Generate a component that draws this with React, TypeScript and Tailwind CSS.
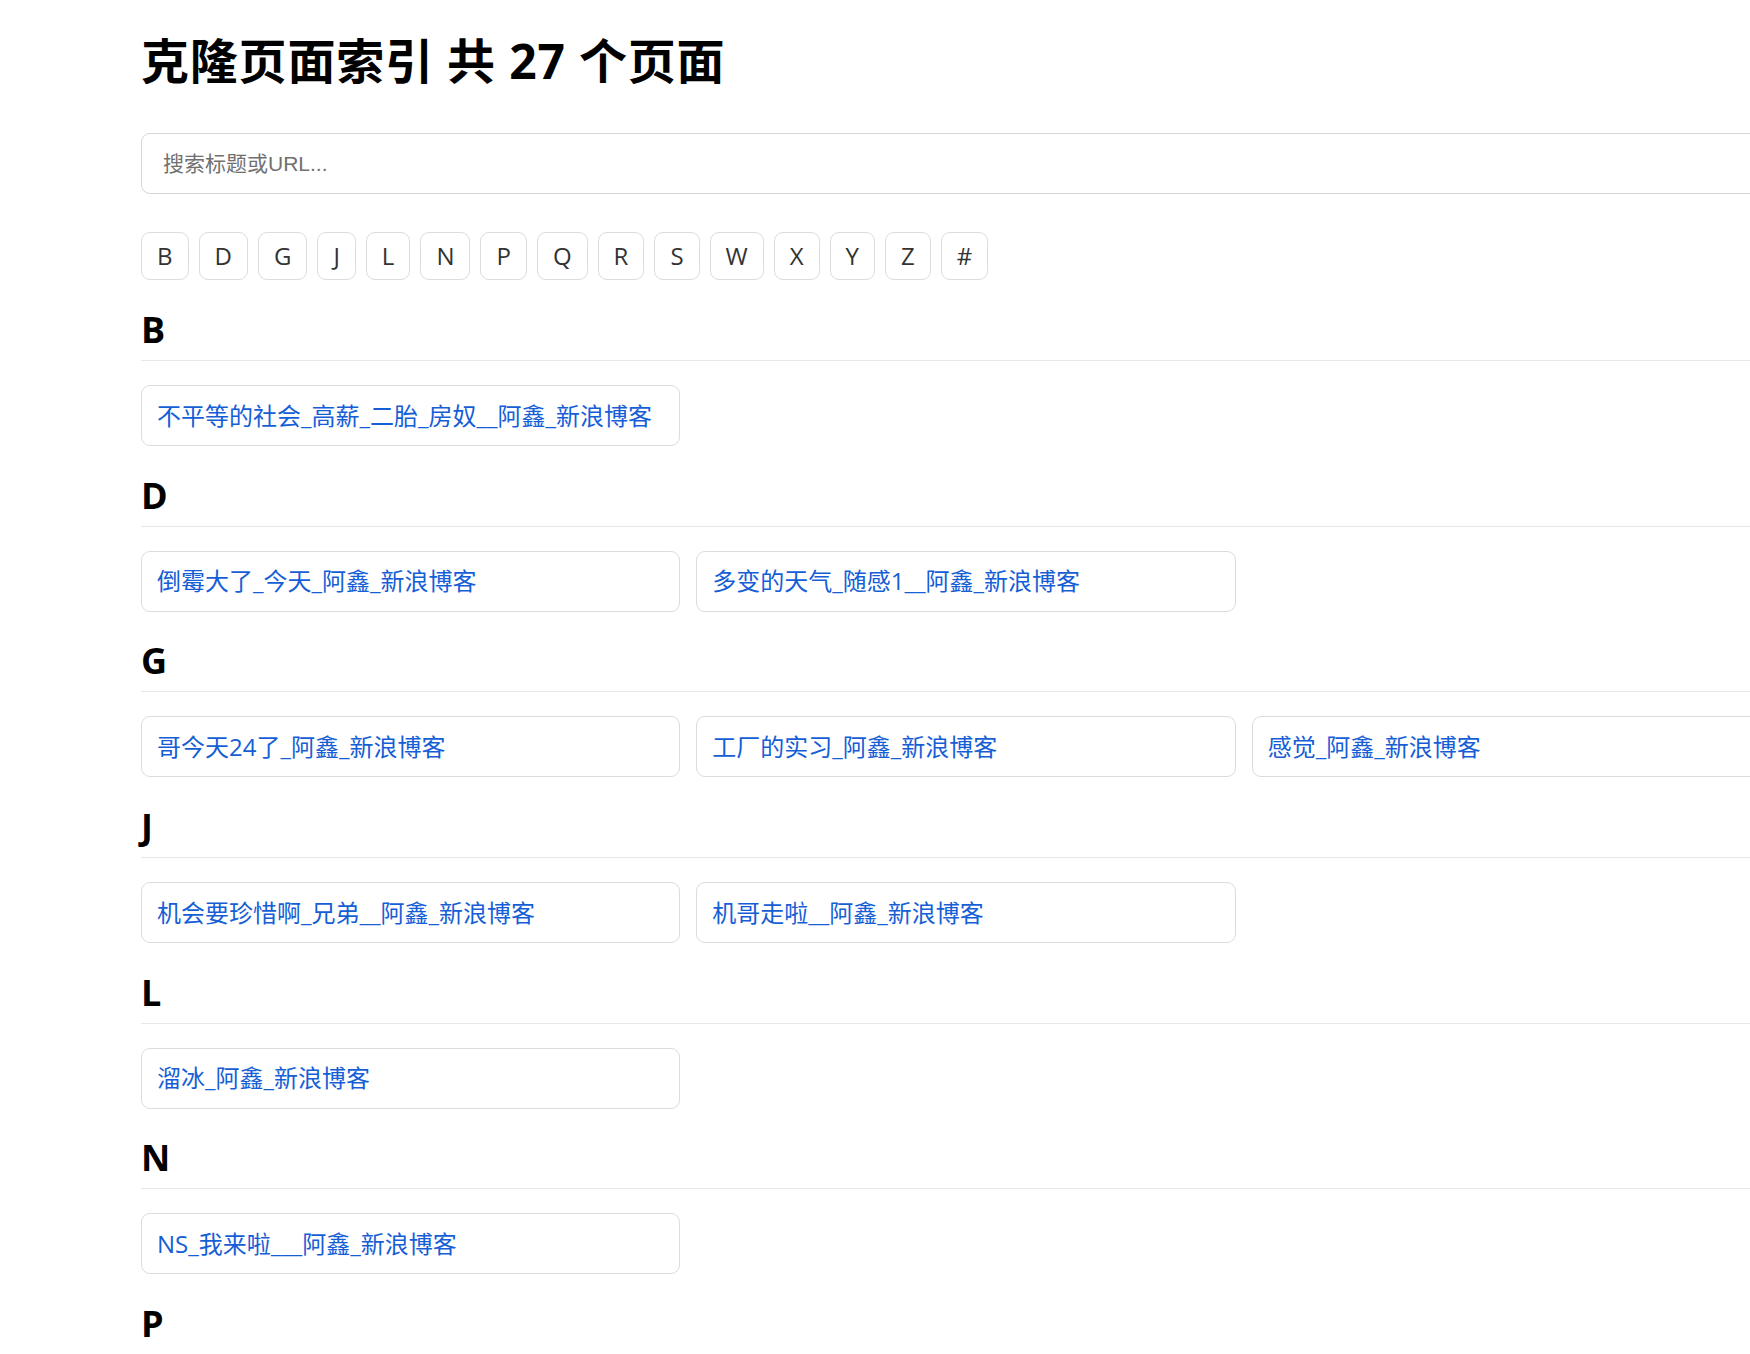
import React from "react";

const sections: { letter: string; items: string[] }[] = [
  { letter: "B", items: ["不平等的社会_高薪_二胎_房奴__阿鑫_新浪博客"] },
  { letter: "D", items: ["倒霉大了_今天_阿鑫_新浪博客", "多变的天气_随感1__阿鑫_新浪博客"] },
  { letter: "G", items: ["哥今天24了_阿鑫_新浪博客", "工厂的实习_阿鑫_新浪博客", "感觉_阿鑫_新浪博客"] },
  { letter: "J", items: ["机会要珍惜啊_兄弟__阿鑫_新浪博客", "机哥走啦__阿鑫_新浪博客"] },
  { letter: "L", items: ["溜冰_阿鑫_新浪博客"] },
  { letter: "N", items: ["NS_我来啦___阿鑫_新浪博客"] },
  { letter: "P", items: ["朋友_阿鑫_新浪博客", "跑步_阿鑫_新浪博客"] },
  { letter: "Q", items: ["青春_阿鑫_新浪博客", "秋天来了_阿鑫_新浪博客"] },
  { letter: "R", items: ["人生_阿鑫_新浪博客", "热_阿鑫_新浪博客"] },
  { letter: "S", items: ["生活_阿鑫_新浪博客", "睡不着__阿鑫_新浪博客"] },
  { letter: "W", items: ["无聊_阿鑫_新浪博客", "晚安_阿鑫_新浪博客"] },
  { letter: "X", items: ["新年快乐_阿鑫_新浪博客", "想家了_阿鑫_新浪博客"] },
  { letter: "Y", items: ["雨天_阿鑫_新浪博客", "一年了_阿鑫_新浪博客"] },
  { letter: "Z", items: ["周末_阿鑫_新浪博客", "再见_阿鑫_新浪博客"] },
  { letter: "#", items: ["2011_阿鑫_新浪博客"] },
];

export default function App() {
  return (
    <div className="w-full min-h-screen overflow-hidden bg-white font-['Open_Sans','Noto_Sans_CJK_SC',sans-serif] text-black">
      <div className="w-[1650px] ml-[141px] pt-[33px] pb-[40px]">
        <h1 className="text-[48px] leading-[56px] font-bold m-0 tracking-[0.8px]">
          克隆页面索引 共 27 个页面
        </h1>

        <input
          type="text"
          placeholder="搜索标题或URL..."
          className="mt-[44px] block w-full h-[61px] border border-[#d6d6d6] rounded-[9px] px-[21px] text-[21px] font-['Liberation_Sans','Noto_Sans_CJK_SC',sans-serif] placeholder:text-[#707070] outline-none"
        />

        <div className="mt-[38px] flex flex-wrap gap-[10px]">
          {sections.map((s) => (
            <a
              key={s.letter}
              href={`#sec-${s.letter}`}
              className="h-[48px] px-[15px] flex items-center justify-center border border-[#dcdcdc] rounded-[9px] bg-white text-[24px] text-[#333] no-underline"
            >
              {s.letter}
            </a>
          ))}
        </div>

        <div className="mt-[28px]">
          {sections.map((s) => (
            <section key={s.letter} id={`sec-${s.letter}`} className="mb-[27.7px]">
              <h2 className="text-[36px] leading-[44px] font-bold pb-[8px] border-b border-[#e8e8e8] m-0">
                {s.letter}
              </h2>
              <div className="mt-[24px] grid grid-cols-3 gap-[16px]">
                {s.items.map((t) => (
                  <a
                    key={t}
                    href="#"
                    className="h-[61px] flex items-center px-[15px] border border-[#dcdcdc] rounded-[9px] text-[24px] text-[#155ed6] no-underline whitespace-nowrap overflow-hidden font-['Open_Sans','Noto_Sans_CJK_SC',sans-serif]"
                  >
                    {t}
                  </a>
                ))}
              </div>
            </section>
          ))}
        </div>
      </div>
    </div>
  );
}
